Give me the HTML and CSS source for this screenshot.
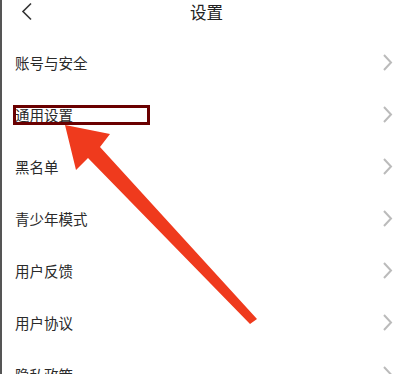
FILE: index.html
```html
<!DOCTYPE html>
<html lang="zh">
<head>
<meta charset="utf-8">
<link rel="stylesheet" href="styles.css">
</head>
<body>
<div class="page">
  <header class="topbar">
    <svg class="back" width="12" height="19" viewBox="0 0 12 19"><path d="M10 1.5 L2 9.5 L10 17.5" fill="none" stroke="#333" stroke-width="1.6"/></svg>
    <div class="title">设置</div>
  </header>
  <ul class="list">
    <li class="row"><span>账号与安全</span><svg class="chev" width="11" height="17" viewBox="0 0 11 17"><path d="M2 1 L9 8.5 L2 16" fill="none" stroke="#bbb" stroke-width="2"/></svg></li>
    <li class="row"><span>通用设置</span><svg class="chev" width="11" height="17" viewBox="0 0 11 17"><path d="M2 1 L9 8.5 L2 16" fill="none" stroke="#bbb" stroke-width="2"/></svg></li>
    <li class="row"><span>黑名单</span><svg class="chev" width="11" height="17" viewBox="0 0 11 17"><path d="M2 1 L9 8.5 L2 16" fill="none" stroke="#bbb" stroke-width="2"/></svg></li>
    <li class="row"><span>青少年模式</span><svg class="chev" width="11" height="17" viewBox="0 0 11 17"><path d="M2 1 L9 8.5 L2 16" fill="none" stroke="#bbb" stroke-width="2"/></svg></li>
    <li class="row"><span>用户反馈</span><svg class="chev" width="11" height="17" viewBox="0 0 11 17"><path d="M2 1 L9 8.5 L2 16" fill="none" stroke="#bbb" stroke-width="2"/></svg></li>
    <li class="row"><span>用户协议</span><svg class="chev" width="11" height="17" viewBox="0 0 11 17"><path d="M2 1 L9 8.5 L2 16" fill="none" stroke="#bbb" stroke-width="2"/></svg></li>
    <li class="row"><span>隐私政策</span><svg class="chev" width="11" height="17" viewBox="0 0 11 17"><path d="M2 1 L9 8.5 L2 16" fill="none" stroke="#bbb" stroke-width="2"/></svg></li>
  </ul>
  <svg class="annot" width="411" height="374" viewBox="0 0 411 374">
    <rect x="14.5" y="106.5" width="134" height="17" fill="none" stroke="#6a0000" stroke-width="3"/>
    <polygon points="65,125 110,134 100,147 257,319 250,324 88,158 76,170" fill="#ef3a1d"/>
  </svg>
</div>
</body>
</html>
```
FILE: styles.css
```css
html, body {
  margin: 0;
  padding: 0;
  background: #fff;
}
.page {
  position: relative;
  width: 411px;
  height: 374px;
  overflow: hidden;
  border-left: 2px solid #555;
  box-sizing: border-box;
  font-family: "Noto Sans CJK SC", "Noto Sans", sans-serif;
  color: #2a2a2a;
}
.topbar {
  height: 36px;
  display: flex;
  justify-content: center;
  position: relative;
}
.back {
  position: absolute;
  left: 19px;
  top: 2px;
}
.title {
  font-size: 16.5px;
  line-height: 18px;
  padding-top: 3px;
  color: #222;
}
.list {
  list-style: none;
  margin: 0;
  padding: 0;
}
.row {
  height: 52px;
  display: flex;
  align-items: center;
  justify-content: space-between;
  padding: 0 18px 0 13px;
  font-size: 14.5px;
}
.chev {
  display: block;
}
.annot {
  position: absolute;
  left: -2px;
  top: 0;
}
```
